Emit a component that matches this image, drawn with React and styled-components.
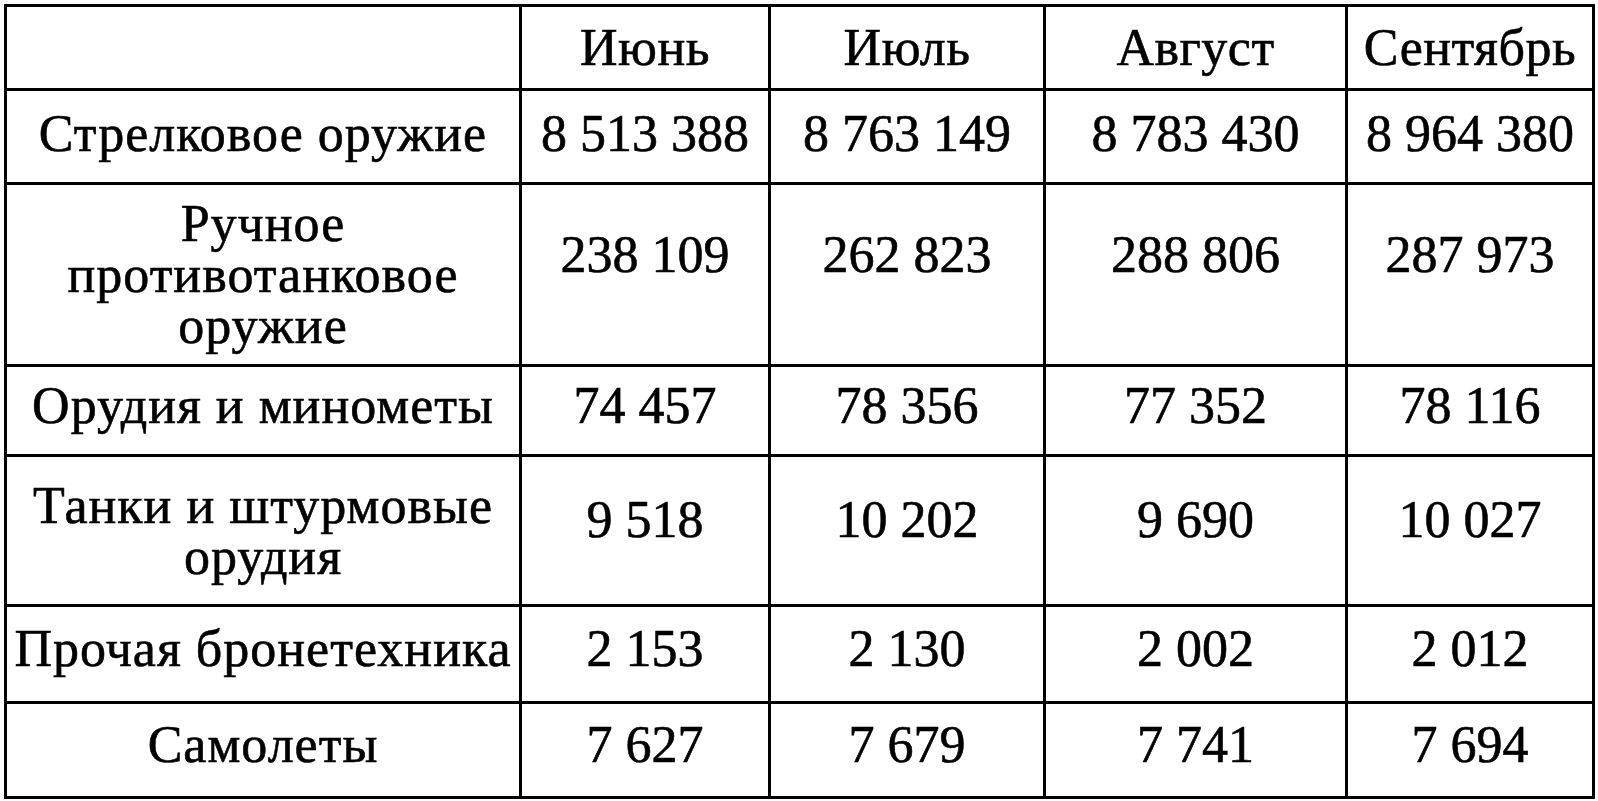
import styled, { createGlobalStyle } from "styled-components";

const GlobalStyle = createGlobalStyle`
  html, body {
    margin: 0;
    padding: 0;
    background: #fff;
  }
  body {
    font-family: "Liberation Serif", "Times New Roman", serif;
    color: #000;
  }
`;

const Page = styled.div`
  padding: 4px 0 0 4px;
`;

const Grid = styled.div`
  display: grid;
  grid-template-columns: 512px 246px 272px 299px 244px;
  grid-template-rows: 81px 91px 179px 87px 147px 94px 92px;
  gap: 3px;
  padding: 3px;
  width: max-content;
  background: #000;
`;

const Cell = styled.div`
  background: #fff;
  display: flex;
  flex-direction: column;
  align-items: center;
  justify-content: ${({ $top }) => ($top ? "flex-start" : "center")};
  padding-top: ${({ $top }) => ($top ? `${$top}px` : "0")};
  padding-bottom: ${({ $lift }) => ($lift ? `${$lift}px` : "0")};
  box-sizing: border-box;
  font-family: "Liberation Serif", "Times New Roman", serif;
  font-size: 52px;
  line-height: 51px;
  text-align: center;
  white-space: nowrap;
  -webkit-text-stroke: 0.6px #000;
`;

const Head = styled(Cell)`
  letter-spacing: 0.5px;
`;

const Label = styled(Cell)`
  white-space: normal;
  letter-spacing: 1px;
`;

const months = ["Июнь", "Июль", "Август", "Сентябрь"];

const rows = [
  { label: ["Стрелковое оружие"], values: ["8 513 388", "8 763 149", "8 783 430", "8 964 380"], lift: 6 },
  { label: ["Ручное", "противотанковое", "оружие"], values: ["238 109", "262 823", "288 806", "287 973"], top: 44 },
  { label: ["Орудия и минометы"], values: ["74 457", "78 356", "77 352", "78 116"], lift: 10 },
  { label: ["Танки и штурмовые", "орудия"], values: ["9 518", "10 202", "9 690", "10 027"], top: 37 },
  { label: ["Прочая бронетехника"], values: ["2 153", "2 130", "2 002", "2 012"], lift: 12 },
  { label: ["Самолеты"], values: ["7 627", "7 679", "7 741", "7 694"], lift: 12 },
];

export default function App() {
  return (
    <Page>
      <GlobalStyle />
      <Grid>
        <Head />
        {months.map((m) => (
          <Head key={m}>{m}</Head>
        ))}
        {rows.map((r) => (
          <>
            <Label key={r.label[0]} $lift={r.lift}>
              {r.label.map((line) => (
                <span key={line}>{line}</span>
              ))}
            </Label>
            {r.values.map((v, i) => (
              <Cell key={r.label[0] + i} $top={r.top} $lift={r.lift}>
                {v}
              </Cell>
            ))}
          </>
        ))}
      </Grid>
    </Page>
  );
}
